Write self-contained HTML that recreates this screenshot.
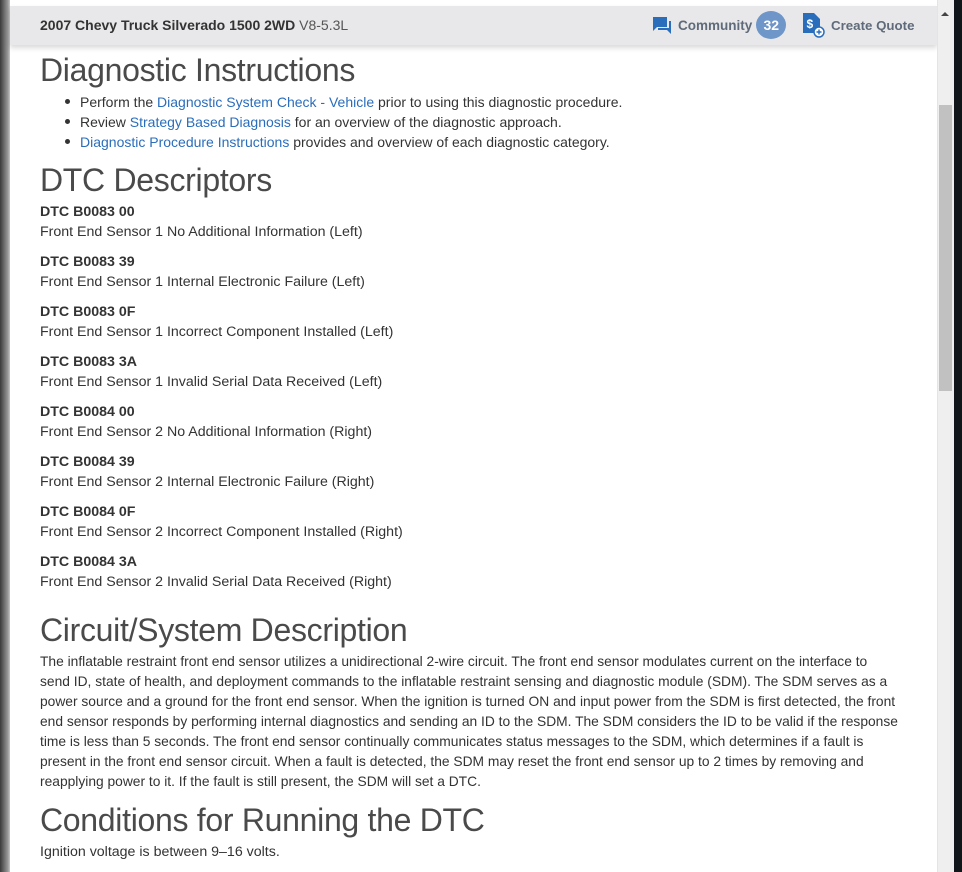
<!DOCTYPE html>
<html><head><meta charset="utf-8"><style>
*{margin:0;padding:0;box-sizing:border-box}
body{width:962px;height:872px;overflow:hidden;background:#fff;font-family:"Liberation Sans",Arial,sans-serif;color:#333;position:relative}
.lb{position:absolute;left:0;top:0;width:10px;height:872px;background:linear-gradient(90deg,#3a3a3a,#6a6a6a 40%,#9a9a9a 80%,#c8c8c8)}
.rb{position:absolute;left:954px;top:0;width:8px;height:872px;background:#121619}
.sb{position:absolute;left:937px;top:0;width:17px;height:872px;background:#efefef;border-left:1px solid #e4e4e4}
.thumb{position:absolute;left:939px;top:105px;width:13px;height:286px;background:#c1c1c1}
.arr{position:absolute;left:941px;top:12px;width:0;height:0;border-left:4px solid transparent;border-right:4px solid transparent;border-bottom:4px solid #444}
.hdr{position:absolute;left:10px;top:6px;width:927px;height:39px;background:#e8e8ea;box-shadow:0 3px 5px rgba(0,0,0,.15)}
.ttl{position:absolute;left:30px;top:11px;font-size:14px;font-weight:bold;color:#333;white-space:nowrap}
.ttl span{font-weight:normal;color:#555}
.com{position:absolute;left:642px;top:4px;height:30px;display:flex;align-items:center;font-size:13.5px;font-weight:bold;color:#5f6b7a;white-space:nowrap}
.badge{display:inline-block;width:30px;height:28px;border-radius:50%;background:#6f96c8;color:#fff;text-align:center;line-height:28px;margin-left:4px;font-size:14px}
.cq{position:absolute;left:792px;top:4px;height:30px;display:flex;align-items:center;font-size:13.3px;font-weight:bold;color:#5f6b7a;white-space:nowrap}
.c{position:absolute;left:40px;white-space:nowrap;font-size:14.2px;line-height:20px}
h1{position:absolute;left:40px;font-weight:300;font-size:32px;color:#4a4a4a;white-space:nowrap;line-height:40px;letter-spacing:-.3px}
a{color:#2a6ebb;text-decoration:none}
ul{position:absolute;left:80px;top:92px;font-size:14px;line-height:20px;list-style:none;white-space:nowrap}
ul li:before{content:"";position:absolute;left:-15px;margin-top:7px;width:5px;height:5px;border-radius:50%;background:#333}
b{font-weight:bold}
.p{font-size:13.8px}
</style></head><body>
<div class="lb"></div>
<div class="hdr">
<div class="ttl">2007 Chevy Truck Silverado 1500 2WD <span>V8-5.3L</span></div>
<div class="com"><svg width="20" height="20" viewBox="0 0 20 20" style="margin-right:6px"><path d="M1 2h14v10H5l-4 4z" fill="#2a6ebb"/><path d="M17 6h2v13l-4-4H6v-2h11z" fill="#2a6ebb"/></svg>Community<span class="badge">32</span></div>
<div class="cq"><svg width="24" height="26" viewBox="0 0 24 26" style="margin-right:5px"><path d="M1 1h11l6 6v14H1z" fill="#2a6ebb"/><text x="4.5" y="16" font-size="12" font-weight="bold" fill="#fff" font-family="Liberation Sans">$</text><circle cx="17" cy="20" r="5" fill="#fff" stroke="#2a6ebb" stroke-width="1.5"/><path d="M17 17.5v5M14.5 20h5" stroke="#2a6ebb" stroke-width="1.4"/></svg>Create Quote</div>
</div>
<div class="sb"></div><div class="thumb"></div><div class="arr"></div>
<div class="rb"></div>

<h1 style="top:50px">Diagnostic Instructions</h1>
<ul>
<li>Perform the <a>Diagnostic System Check - Vehicle</a> prior to using this diagnostic procedure.</li>
<li>Review <a>Strategy Based Diagnosis</a> for an overview of the diagnostic approach.</li>
<li><a>Diagnostic Procedure Instructions</a> provides and overview of each diagnostic category.</li>
</ul>
<h1 style="top:160px">DTC Descriptors</h1>
<div class="c" style="top:202px"><b>DTC B0083 00</b><br>Front End Sensor 1 No Additional Information (Left)</div>
<div class="c" style="top:252px"><b>DTC B0083 39</b><br>Front End Sensor 1 Internal Electronic Failure (Left)</div>
<div class="c" style="top:302px"><b>DTC B0083 0F</b><br>Front End Sensor 1 Incorrect Component Installed (Left)</div>
<div class="c" style="top:352px"><b>DTC B0083 3A</b><br>Front End Sensor 1 Invalid Serial Data Received (Left)</div>
<div class="c" style="top:402px"><b>DTC B0084 00</b><br>Front End Sensor 2 No Additional Information (Right)</div>
<div class="c" style="top:452px"><b>DTC B0084 39</b><br>Front End Sensor 2 Internal Electronic Failure (Right)</div>
<div class="c" style="top:502px"><b>DTC B0084 0F</b><br>Front End Sensor 2 Incorrect Component Installed (Right)</div>
<div class="c" style="top:552px"><b>DTC B0084 3A</b><br>Front End Sensor 2 Invalid Serial Data Received (Right)</div>
<h1 style="top:610px">Circuit/System Description</h1>
<div class="c p" style="top:652px">The inflatable restraint front end sensor utilizes a unidirectional 2-wire circuit. The front end sensor modulates current on the interface to<br>send ID, state of health, and deployment commands to the inflatable restraint sensing and diagnostic module (SDM). The SDM serves as a<br>power source and a ground for the front end sensor. When the ignition is turned ON and input power from the SDM is first detected, the front<br>end sensor responds by performing internal diagnostics and sending an ID to the SDM. The SDM considers the ID to be valid if the response<br>time is less than 5 seconds. The front end sensor continually communicates status messages to the SDM, which determines if a fault is<br>present in the front end sensor circuit. When a fault is detected, the SDM may reset the front end sensor up to 2 times by removing and<br>reapplying power to it. If the fault is still present, the SDM will set a DTC.</div>
<h1 style="top:800px">Conditions for Running the DTC</h1>
<div class="c" style="top:842px">Ignition voltage is between 9–16 volts.</div>
</body></html>
